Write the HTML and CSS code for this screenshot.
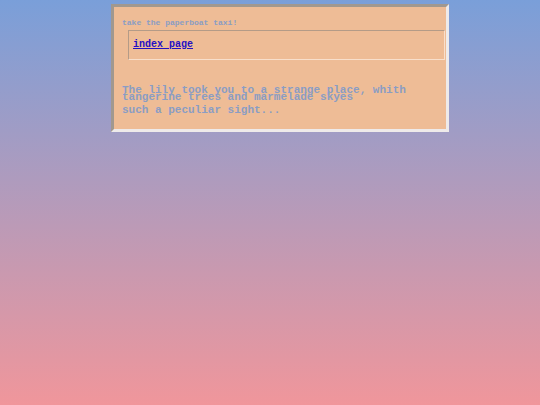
FILE: index.html
```html
<!DOCTYPE html>
<html lang="en">
<head>
<meta charset="utf-8">
<meta name="viewport" content="width=device-width, initial-scale=1">
<title>Paperboat taxi</title>
<link rel="stylesheet" href="styles.css">
</head>
<body>
<main class="panel">
  <p class="note">take the paperboat taxi!</p>
  <nav class="links"><a href="index.html">index page</a></nav>
  <p class="story">The lily took you to a strange place, whith tangerine trees and marmelade skyes</p>
  <p class="story">such a peculiar sight...</p>
</main>
</body>
</html>
```
FILE: styles.css
```css
* {
  box-sizing: border-box;
}

body {
  min-height: 100vh;
  margin: 0;
  padding: 4px 91px 0 111px;
  background: linear-gradient(#7a9fd9, #f0969b);
  color: #8a9dc4;
  font-family: "Liberation Mono", monospace;
  font-weight: bold;
}

.panel {
  padding: 12px 1px 15px 8px;
  border: 3px solid;
  border-color: #a1988f #eeeaea #eeeaea #a1988f;
  background: #eebc96;
}

p {
  margin: 0;
}

.note {
  font-size: 8px;
  line-height: 7px;
}

.links {
  margin: 4px 0 27px 6px;
  padding: 8px 4px;
  border: 1px solid;
  border-color: #b49b87 #f8dfcc #f8dfcc #b49b87;
  font-size: 10px;
  line-height: 12px;
}

.links a {
  color: #2410c4;
}

.story {
  margin-bottom: 6px;
  font-size: 11px;
  line-height: 7px;
}

.story:last-child {
  margin-bottom: 0;
}
```
